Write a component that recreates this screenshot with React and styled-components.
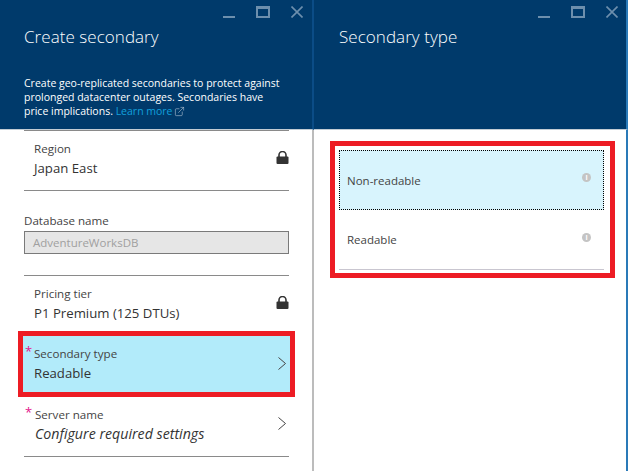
import styled, { createGlobalStyle } from 'styled-components'
import { ExternalLink } from 'lucide-react'

const GlobalStyle = createGlobalStyle`
  html, body {
    margin: 0;
    padding: 0;
    background: #fff;
    font-family: "Open Sans", "Liberation Sans", sans-serif;
  }
`

const Page = styled.div`
  display: flex;
  width: 628px;
  height: 471px;
  overflow: hidden;
`

const Blade = styled.div`
  width: 314px;
  flex-shrink: 0;
  display: flex;
  flex-direction: column;
`

const Header = styled.div`
  position: relative;
  height: 130px;
  flex-shrink: 0;
  background: #003a6b;
  box-sizing: border-box;
  padding: 26px 24px 0 ${props => props.$left}px;
  color: #fff;
  border-bottom: 1px solid #c3ccd4;
  border-right: 2px solid ${props => props.$edge};
`

const Title = styled.div`
  font-size: 17px;
  line-height: 22px;
  font-weight: 300;
  letter-spacing: 0.05px;
`

const Intro = styled.div`
  margin-top: 28px;
  width: 262px;
  font-size: 10.5px;
  line-height: 14.2px;
`

const LearnMore = styled.span`
  color: #12a0dc;
`

const LinkIcon = styled(ExternalLink)`
  vertical-align: -2px;
  margin-left: 1px;
`

const WindowButtons = styled.div`
  position: absolute;
  top: 6px;
  right: ${props => props.$right}px;
  display: flex;
  align-items: flex-start;
  gap: 21px;
`

const Content = styled.div`
  flex: 1;
  border-right: 2px solid ${props => props.$edge};
`

const Form = styled(Content)`
  padding: 0 23px 0 24px;
`

const Row = styled.div`
  display: flex;
  align-items: flex-start;
  justify-content: space-between;
  height: ${props => props.$height}px;
  padding: 10px 0 0 10px;
  box-sizing: border-box;
  border-top: ${props => (props.$top ? '1px solid #8a8a8a' : 'none')};
  border-bottom: ${props => (props.$line ? '1px solid #8a8a8a' : 'none')};
`

const Label = styled.div`
  font-size: 11.6px;
  line-height: 16px;
  color: #444;
`

const Value = styled.div`
  font-size: ${props => (props.$italic ? '14.2px' : '13.2px')};
  line-height: 22px;
  color: #333;
  font-style: ${props => (props.$italic ? 'italic' : 'normal')};
`

const Field = styled.div`
  height: 85px;
  padding-top: 22px;
  box-sizing: border-box;
  border-bottom: 1px solid #8a8a8a;
`

const FieldInput = styled.div`
  margin-top: 2px;
  height: 23px;
  box-sizing: border-box;
  background: #e6e6e6;
  border: 1px solid #7a7a7a;
  padding-left: 8px;
  font-size: 11.5px;
  line-height: 21px;
  color: #a0a0a0;
`

const LockIcon = styled.svg`
  margin-top: 10px;
  flex-shrink: 0;
`

const Highlight = styled.div`
  margin: 0 -6px;
  border: 5px solid #ed1c24;
  background: #b2ebfa;
`

const RequiredRow = styled.div`
  position: relative;
  display: flex;
  align-items: flex-start;
  justify-content: space-between;
  height: ${props => props.$height}px;
  padding: 10px ${props => props.$right}px 0 ${props => props.$left}px;
  box-sizing: border-box;
  border-bottom: ${props => (props.$line ? '1px solid #8a8a8a' : 'none')};
`

const Star = styled.span`
  position: absolute;
  left: ${props => props.$left}px;
  top: 8px;
  font-size: 13px;
  line-height: 14px;
  color: #e3168c;
`

const Chevron = styled.svg`
  margin-top: ${props => props.$top}px;
  flex-shrink: 0;
`

const Options = styled.div`
  margin: 11px 0 0 16px;
  width: 285px;
  height: 137px;
  box-sizing: border-box;
  border: 5px solid #ed1c24;
  padding: 4px 6px 0 4px;
`

const Option = styled.div`
  display: flex;
  align-items: center;
  justify-content: space-between;
  height: 60px;
  box-sizing: border-box;
  padding: 0 13px 0 8px;
  font-size: 11.5px;
  color: #444;
  background: ${props => (props.$selected ? '#d8f4fd' : 'transparent')};
  outline: ${props => (props.$selected ? '1px dotted #000' : 'none')};
  outline-offset: -1px;
  border-bottom: ${props => (props.$line ? '1px solid #c9c6d0' : 'none')};
`

const InfoBadge = styled.span`
  width: 9px;
  height: 9px;
  border-radius: 50%;
  background: #c4c4c4;
  color: #fff;
  font-size: 7px;
  line-height: 9px;
  font-weight: 700;
  text-align: center;
  margin-top: -5px;
`

function WindowIcons({ right }) {
  return (
    <WindowButtons $right={right}>
      <svg width="12" height="12" viewBox="0 0 12 12">
        <rect x="0" y="10" width="12" height="2" fill="#6d8fad" />
      </svg>
      <svg width="14" height="12" viewBox="0 0 14 12">
        <path d="M0 0h14v12H0z M2 3v7h10V3z" fill="#6d8fad" fillRule="evenodd" />
      </svg>
      <svg width="12" height="12" viewBox="0 0 12 12">
        <path d="M0.5 0.5l11 11M11.5 0.5l-11 11" stroke="#6d8fad" strokeWidth="1.6" fill="none" />
      </svg>
    </WindowButtons>
  )
}

function Lock() {
  return (
    <LockIcon width="13" height="13" viewBox="0 0 13 13">
      <path d="M3 6V4a3.5 3.5 0 0 1 7 0V6" stroke="#333" strokeWidth="1.6" fill="none" />
      <rect x="0.5" y="5.5" width="12" height="7.5" rx="1" fill="#333" />
    </LockIcon>
  )
}

function RowChevron({ top }) {
  return (
    <Chevron $top={top} width="8" height="13" viewBox="0 0 8 13">
      <path d="M0.5 0.5l7 6-7 6" stroke="#444" strokeWidth="1" fill="none" />
    </Chevron>
  )
}

export default function App() {
  return (
    <Page>
      <GlobalStyle />
      <Blade>
        <Header $left={24} $edge="#0b4c86">
          <WindowIcons right={9} />
          <Title>Create secondary</Title>
          <Intro>
            Create geo-replicated secondaries to protect against prolonged datacenter outages.
            Secondaries have price implications. <LearnMore>Learn more</LearnMore>
            <LinkIcon size={11} strokeWidth={1.2} color="#c5d2de" />
          </Intro>
        </Header>
        <Form $edge="#bcbcbc">
          <Row $height={61} $top $line>
            <div>
              <Label>Region</Label>
              <Value>Japan East</Value>
            </div>
            <Lock />
          </Row>
          <Field>
            <Label>Database name</Label>
            <FieldInput>AdventureWorksDB</FieldInput>
          </Field>
          <Row $height={55}>
            <div>
              <Label>Pricing tier</Label>
              <Value>P1 Premium (125 DTUs)</Value>
            </div>
            <Lock />
          </Row>
          <Highlight>
            <RequiredRow $height={56} $left={11} $right={4}>
              <Star $left={2}>*</Star>
              <div>
                <Label>Secondary type</Label>
                <Value>Readable</Value>
              </div>
              <RowChevron top={11} />
            </RequiredRow>
          </Highlight>
          <RequiredRow $height={60} $left={11} $right={3} $line>
            <Star $left={1}>*</Star>
            <div>
              <Label>Server name</Label>
              <Value $italic>Configure required settings</Value>
            </div>
            <RowChevron top={10} />
          </RequiredRow>
        </Form>
      </Blade>
      <Blade>
        <Header $left={25} $edge="#2a7ab8">
          <WindowIcons right={8} />
          <Title>Secondary type</Title>
        </Header>
        <Content $edge="#2a7ab8">
          <Options>
            <Option $selected>
              Non-readable
              <InfoBadge>i</InfoBadge>
            </Option>
            <Option $line>
              Readable
              <InfoBadge>i</InfoBadge>
            </Option>
          </Options>
        </Content>
      </Blade>
    </Page>
  )
}
